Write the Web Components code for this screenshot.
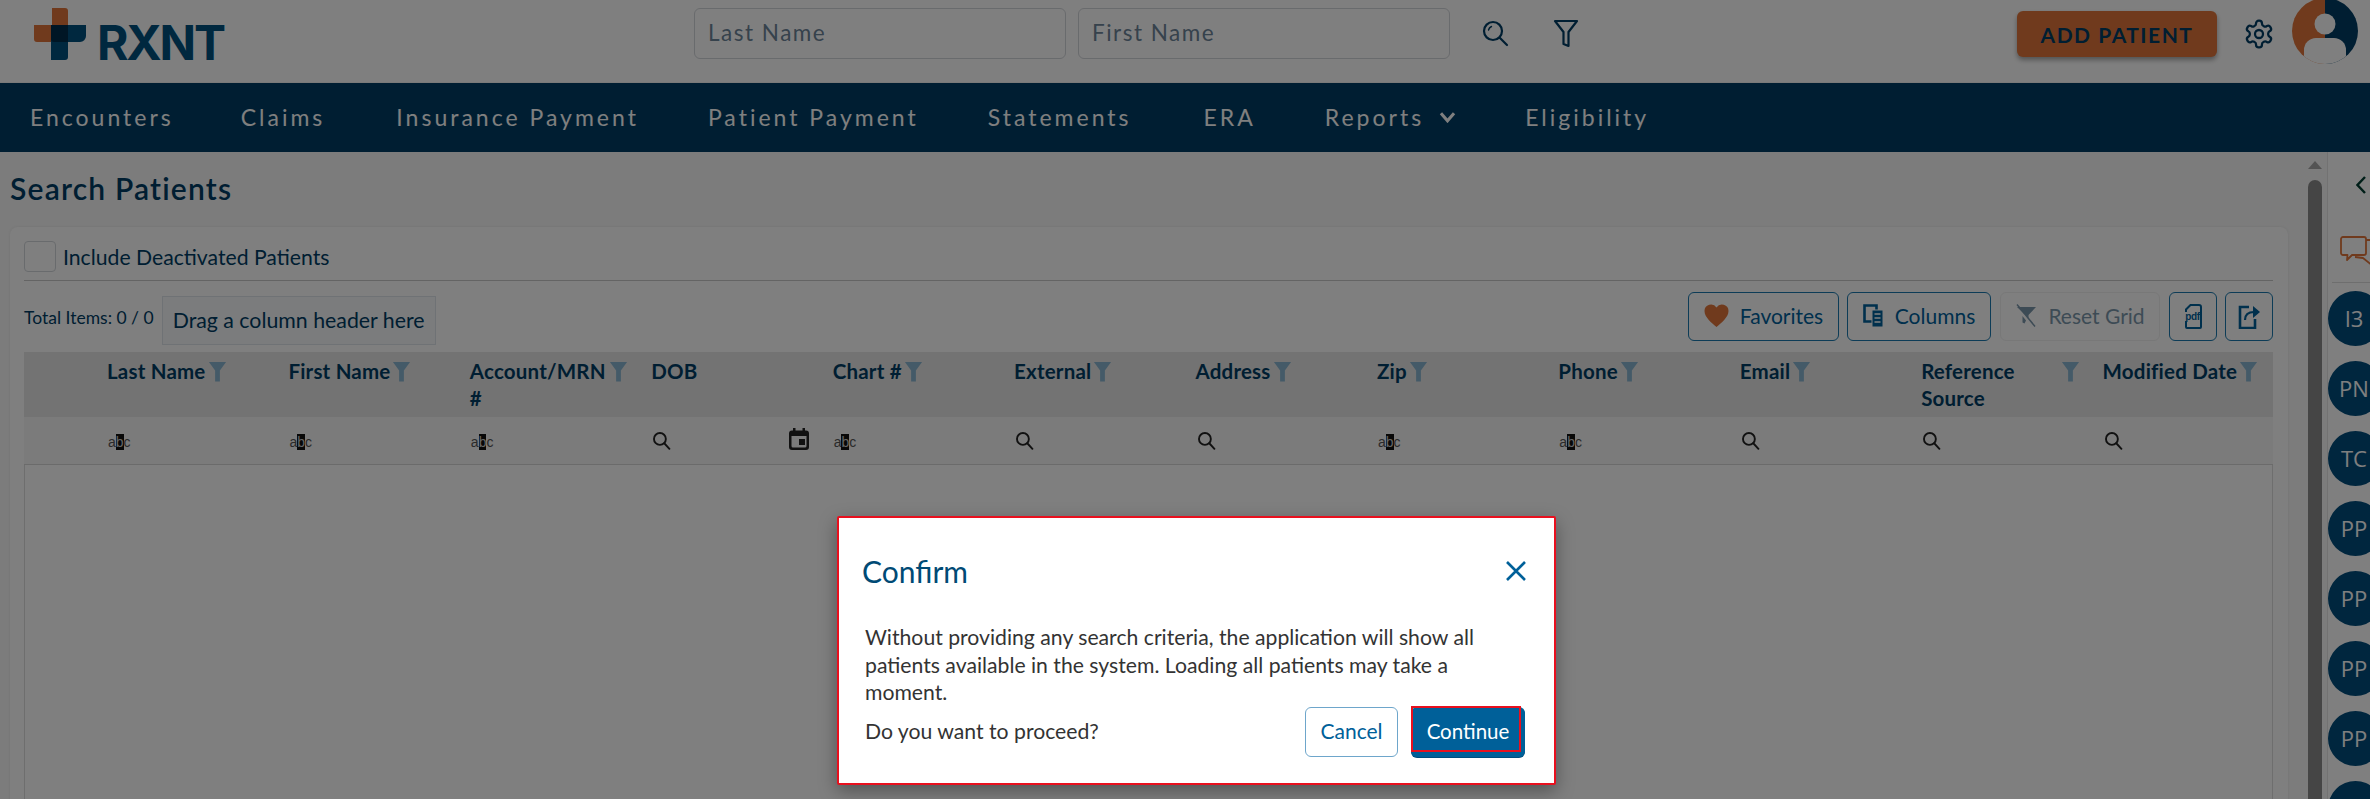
<!DOCTYPE html>
<html>
<head>
<meta charset="utf-8">
<title>Search Patients</title>
<style>
  html, body { margin: 0; height: 799px; overflow: hidden; background: #fff; }
  body { font-family: Lato, "Open Sans", sans-serif; color: #003d64; }
</style>
</head>
<body>
<rx-app></rx-app>

<script>
// shared icons
const ICON = {
  search: `<svg viewBox="0 0 24 24" fill="none" stroke="currentColor" stroke-width="2.4" stroke-linecap="round"><circle cx="10" cy="10" r="7.5"/><path d="M15.5 15.5 22 22.5"/></svg>`,
  funnel: `<svg viewBox="0 0 20 22" fill="currentColor"><path d="M1 1h18l-6.5 9v11.5h-5V10z"/></svg>`,
  gear: `<svg viewBox="0 0 24 24" fill="none" stroke="currentColor" stroke-width="1.7" stroke-linejoin="round"><path d="M12.22 2h-.44a2 2 0 0 0-2 2v.18a2 2 0 0 1-1 1.73l-.43.25a2 2 0 0 1-2 0l-.15-.08a2 2 0 0 0-2.73.73l-.22.38a2 2 0 0 0 .73 2.73l.15.1a2 2 0 0 1 1 1.72v.51a2 2 0 0 1-1 1.74l-.15.09a2 2 0 0 0-.73 2.73l.22.38a2 2 0 0 0 2.73.73l.15-.08a2 2 0 0 1 2 0l.43.25a2 2 0 0 1 1 1.73V20a2 2 0 0 0 2 2h.44a2 2 0 0 0 2-2v-.18a2 2 0 0 1 1-1.73l.43-.25a2 2 0 0 1 2 0l.15.08a2 2 0 0 0 2.73-.73l.22-.39a2 2 0 0 0-.73-2.73l-.15-.08a2 2 0 0 1-1-1.74v-.5a2 2 0 0 1 1-1.74l.15-.09a2 2 0 0 0 .73-2.73l-.22-.38a2 2 0 0 0-2.73-.73l-.15.08a2 2 0 0 1-2 0l-.43-.25a2 2 0 0 1-1-1.73V4a2 2 0 0 0-2-2z"/><circle cx="12" cy="12" r="3"/></svg>`
};

// top bar with logo, name search and the account bits
class RxHeader extends HTMLElement {
  constructor() {
    super();
    this.attachShadow({ mode: "open" }).innerHTML = `
<style>
  :host { display: flex; align-items: flex-start; height: 82px; border-bottom: 1px solid #f4f4f4; background: #fff; box-sizing: content-box; }
  .logo { display: flex; margin: 8px 0 0 34px; width: 660px; height: 60px; }
  .logo svg { width: 52px; height: 52px; flex: none; }
  .logo b { font: 700 48px/35px Inter, sans-serif; margin: 17px 0 0 11px; color: #00507f; letter-spacing: -2.2px; }
  input { width: 372px; height: 51px; margin: 8px 12px 0 0; padding: 0 13px 2px; box-sizing: border-box; border: 1px solid #d2d6da; border-radius: 6px; font: 22.5px Lato, sans-serif; letter-spacing: 1.5px; background: #fff; outline: none; }
  input::placeholder { color: #6c8499; opacity: 1; }
  .ico { flex: none; display: block; }
  .add { margin: 11px 0 0 0; width: 200px; height: 46px; border: 0; border-radius: 6px; background: #e0753a; color: #003d64; font: 700 21px Lato, sans-serif; letter-spacing: 1.5px; box-shadow: 0 3px 5px rgba(0,0,0,.35); }
  .gear { color: #003d64; }
  .avatar { width: 66px; height: 66px; margin: -2px 0 0 17px; flex: none; }
</style>
<div class="logo">
  <svg viewBox="0 0 52 52">
    <path d="M18 0h13a3 3 0 0 1 3 3v31H3a3 3 0 0 1-3-3V17h18z" fill="#e0753a"/>
    <path d="M17 17h35v11a6 6 0 0 1-6 6H34v15a3 3 0 0 1-3 3H17z" fill="#00507f"/>
    <path d="M17 17h17v17H20a3 3 0 0 1-3-3z" fill="#002c4a"/>
  </svg>
  <b>RXNT</b>
</div>
<input placeholder="Last Name"><input placeholder="First Name">
<svg class="ico" style="width:28px;height:28px;margin:20px 0 0 20px" viewBox="0 0 28 28" fill="none" stroke="#003d64" stroke-width="2.2" stroke-linecap="round"><circle cx="11" cy="11" r="9"/><path d="M18 18 25 25"/><path d="M6.5 10A5 5 0 0 1 9.5 6.5" stroke-width="1.4"/></svg>
<svg class="ico" style="width:28px;height:30px;margin:19px 0 0 42px" viewBox="0 0 28 30" fill="none" stroke="#003d64" stroke-width="2.2" stroke-linejoin="round"><path d="M3 2h22l-8.5 11v14l-5-2V13z"/></svg>
<span style="width:437px;flex:none"></span>
<button class="add">ADD PATIENT</button>
<span class="ico gear" style="width:32px;height:32px;margin:18px 0 0 26px">${ICON.gear}</span>
<svg class="avatar" viewBox="0 0 66 66">
  <defs><clipPath id="c"><circle cx="33" cy="33" r="33"/></clipPath></defs>
  <g clip-path="url(#c)">
    <rect width="33" height="66" fill="#e0753a"/>
    <rect x="33" width="33" height="66" fill="#003d64"/>
    <circle cx="33" cy="26" r="10.5" fill="#fff"/>
    <path d="M12 66V52a12 12 0 0 1 12-12h18a12 12 0 0 1 12 12v14z" fill="#fff"/>
  </g>
</svg>`;
  }
}
customElements.define("rx-header", RxHeader);

class RxNavItem extends HTMLElement {
  constructor() {
    super();
    this.attachShadow({ mode: "open" }).innerHTML = `
<style>
  :host { display: inline-flex; align-items: center; gap: 15px; font: 400 23px Lato, sans-serif; letter-spacing: 3px; color: #fff; white-space: nowrap; }
  ::slotted(svg) { width: 17px; height: 12px; }
</style><slot></slot><slot name="after"></slot>`;
  }
}
customElements.define("rx-nav-item", RxNavItem);

class RxNav extends HTMLElement {
  constructor() {
    super();
    this.attachShadow({ mode: "open" }).innerHTML = `
<style>
  :host { display: flex; align-items: center; gap: 69px; height: 69px; padding-left: 30px; background: #003c64; padding-bottom: 1px; box-sizing: border-box; }
</style><slot></slot>`;
  }
}
customElements.define("rx-nav", RxNav);

// small buttons above the grid
class RxToolButton extends HTMLElement {
  constructor() {
    super();
    this.attachShadow({ mode: "open" }).innerHTML = `
<style>
  :host { display: flex; align-items: center; justify-content: center; gap: 11px; height: 49px; padding-bottom: 2px; box-sizing: border-box; border: 1px solid #1a78ae; border-radius: 6px; font: 21px Lato, sans-serif; color: #00609a; background: #fff; }
  :host([disabled]) { border-color: #f0f0f0; color: #7b97ab; }
</style><slot></slot>`;
  }
}
customElements.define("rx-tool-button", RxToolButton);

class RxHeadCell extends HTMLElement {
  constructor() {
    super();
    const wrap = this.hasAttribute("wrap");
    this.attachShadow({ mode: "open" }).innerHTML = `
<style>
  :host { display: flex; align-items: flex-start; justify-content: ${wrap ? "space-between" : "flex-start"}; padding: 6px 12px 0 11px; font: 700 20.5px/27px Lato, sans-serif; letter-spacing: .2px; color: #003d64; }
  svg { width: 19px; height: 21px; flex: none; color: #88b4d0; margin: 3px 0 0 2px; }
</style>
<span><slot></slot></span>
${this.hasAttribute("plain") ? "" : ICON.funnel}`;
  }
}
customElements.define("rx-head-cell", RxHeadCell);

class RxFilterCell extends HTMLElement {
  constructor() {
    super();
    const kind = this.getAttribute("kind");
    let icon = `<span class="abc">a<i>b</i>c</span>`;
    if (kind != "abc") icon = `<span class="s">${ICON.search}</span>`;
    let cal = "";
    if (kind == "date") cal = `<svg class="cal" viewBox="0 0 20 22" fill="#222"><path d="M4 0h2.5v2.5h7V0H16v2.5h1a3 3 0 0 1 3 3V19a3 3 0 0 1-3 3H3a3 3 0 0 1-3-3V5.5a3 3 0 0 1 3-3h1zM2.5 8v10a1.5 1.5 0 0 0 1.5 1.5h12a1.5 1.5 0 0 0 1.5-1.5V8z"/><rect x="10" y="11" width="6" height="6"/></svg>`;
    this.attachShadow({ mode: "open" }).innerHTML = `
<style>
  :host { display: flex; align-items: center; justify-content: space-between; padding: 0 ${kind == "date" ? 13 : 12}px 0 12px; }
  .abc { font: 14px/17px "Liberation Sans", sans-serif; color: #555; margin-top: 3px; }
  .abc i { font-style: normal; background: #111; color: #ccc; }
  .s { width: 19px; height: 19px; color: #222; display: block; }
  .cal { width: 20px; height: 22px; margin-top: -3px; }
</style>${icon}${cal}`;
  }
}
customElements.define("rx-filter-cell", RxFilterCell);

// the patient grid: toolbar, header row, filter row and an empty body
class RxGrid extends HTMLElement {
  constructor() {
    super();
    const cols = [["Last Name","abc"],["First Name","abc"],["Account/MRN<br>#","abc","wrap"],["DOB","date","plain"],["Chart #","abc"],["External","s"],["Address","s"],["Zip","abc"],["Phone","abc"],["Email","s"],["Reference<br>Source","s","wrap"],["Modified Date","s"]];
    const head = cols.map(c => `<rx-head-cell ${c[2] || ""}>${c[0]}</rx-head-cell>`).join("");
    const filt = cols.map(c => `<rx-filter-cell kind="${c[1]}"></rx-filter-cell>`).join("");
    this.attachShadow({ mode: "open" }).innerHTML = `
<style>
  :host { display: block; }
  .tools { display: flex; align-items: flex-start; height: 60px; padding-top: 11px; box-sizing: content-box; }
  .total { font: 17.5px Lato, sans-serif; margin: 15px 8px 0 0; color: #003d64; white-space: nowrap; }
  .drag { margin-top: 4px; height: 49px; padding: 0 10px 2px; display: flex; align-items: center; box-sizing: border-box; background: #f6f8fa; border: 1px solid #dfe5ea; font: 21.3px Lato, sans-serif; color: #003d64; white-space: nowrap; }
  .right { margin-left: auto; display: flex; gap: 8px; }
  .row { display: grid; grid-template-columns: 72px repeat(12, 1fr); }
  .head { height: 65px; background: #e6e6e6; }
  .filter { height: 47px; background: #f6f6f6; border-bottom: 1px solid #d6d6d6; box-sizing: content-box; }
  .body { height: 400px; border: solid #dcdcdc; border-width: 0 1px; }
  svg { display: block; }
</style>
<div class="tools">
  <div class="total">Total Items: 0 / 0</div>
  <div class="drag">Drag a column header here</div>
  <div class="right">
    <rx-tool-button style="width:151px">
      <svg width="25" height="23" viewBox="0 0 25 23" fill="#e0753a"><path d="M12.5 23C8 19 .5 13.5.5 7A6.5 6.5 0 0 1 12.5 3.5 6.5 6.5 0 0 1 24.5 7C24.5 13.5 17 19 12.5 23z"/></svg>
      <span>Favorites</span>
    </rx-tool-button>
    <rx-tool-button style="width:144px">
      <svg width="21" height="24" viewBox="0 0 21 24" fill="none"><path d="M1.5 1.5h12v16h-12z" stroke="#00609a" stroke-width="2.6"/><path d="M9 6h11v17H9z" fill="#00609a" stroke="#fff" stroke-width="1"/><path d="M11.5 10h6M11.5 14h6M11.5 18h6" stroke="#fff" stroke-width="1.3"/></svg>
      <span>Columns</span>
    </rx-tool-button>
    <rx-tool-button disabled style="width:160px;margin-left:1px">
      <svg width="22" height="24" viewBox="0 0 22 24" fill="#7b97ab"><path d="M2 3h19l-7.5 8v3z"/><path d="M7.5 12l3.5 4.5-1.5 3-2-1z"/><path d="M2 .5l18 22" stroke="#7b97ab" stroke-width="1.5"/></svg>
      <span>Reset Grid</span>
    </rx-tool-button>
    <rx-tool-button style="width:48px;margin-left:1px">
      <svg width="20" height="26" viewBox="0 0 20 26"><path d="M3 9V6.5L7.5 2H16a2 2 0 0 1 2 2v20a1 1 0 0 1-1 1H4a1 1 0 0 1-1-1v-6" fill="none" stroke="#00609a" stroke-width="2"/><text x="9.500" y="17" font-family="Liberation Sans" font-size="10" font-weight="700" text-anchor="middle" fill="#00609a" style="letter-spacing:-.3px">pdf</text></svg>
    </rx-tool-button>
    <rx-tool-button style="width:48px">
      <svg width="23" height="26" viewBox="0 0 23 26" fill="none" stroke="#00609a" stroke-width="2.6"><path d="M11 4H2v21h15v-9"/><path d="M7 17c0-5 3-8 9-8" stroke-width="2.2"/><path d="M15 3l7 6-7 6z" fill="#00609a" stroke="none"/></svg>
    </rx-tool-button>
  </div>
</div>
<div class="row head"><span></span>${head}</div>
<div class="row filter"><span></span>${filt}</div>
<div class="body"></div>`;
  }
}
customElements.define("rx-grid", RxGrid);

class RxSearchPage extends HTMLElement {
  constructor() {
    super();
    this.attachShadow({ mode: "open" }).innerHTML = `
<style>
  :host { display: block; flex: none; width: 2304px; height: 647px; overflow: hidden; background: #f8f8f8; box-sizing: border-box; padding: 19px 0 0 10px; }
  h1 { margin: 0; font: 600 30px/34px Lato, sans-serif; color: #003d64; letter-spacing: 1.2px; }
  .card { width: 2278px; height: 640px; margin-top: 22px; background: #fff; border-radius: 8px; box-sizing: border-box; padding: 14px 15px 0 14px; box-shadow: 0 0 3px rgba(0,0,0,.08); }
  .check { display: flex; height: 39px; border-bottom: 1px solid #c8c8c8; box-sizing: content-box; align-items: flex-start; font: 21.2px/33px Lato, sans-serif; color: #003d64; gap: 7px; }
  .box { width: 32px; height: 31px; box-sizing: border-box; border: 1px solid #d2d6da; border-radius: 4px; background: #fff; }
</style>
<h1>Search Patients</h1>
<div class="card">
  <div class="check"><span class="box"></span><span>Include Deactivated Patients</span></div>
  <rx-grid></rx-grid>
</div>`;
  }
}
customElements.define("rx-search-page", RxSearchPage);

class RxRail extends HTMLElement {
  constructor() {
    super();
    // the last circle only peeks in at the bottom, its label is below the fold
    const names = ["I3","PN","TC","PP","PP","PP","PP",""];
    this.attachShadow({ mode: "open" }).innerHTML = `
<style>
  :host { display: block; flex: none; width: 43px; height: 647px; overflow: hidden; background: #fff; border-left: 1px solid #e4e4e4; box-sizing: border-box; }
  .chev { display: block; margin: 24px 0 0 28px; }
  .chat { display: block; margin: 42px 0 0 12px; }
  hr { border: 0; border-top: 1px solid #dcdcdc; margin: 14px 0 8px 4px; width: 60px; }
  .list { display: flex; flex-direction: column; gap: 15px; }
  .c { width: 55px; height: 55px; border-radius: 50%; background: #004c7c; color: #fff; font: 22px/55px "Open Sans", sans-serif; text-align: center; flex: none; padding-right: 3px; box-sizing: border-box; }
</style>
<svg class="chev" width="10" height="18" viewBox="0 0 10 18" fill="none" stroke="#003d30" stroke-width="2.4"><path d="M9 1 1.5 9 9 17"/></svg>
<svg class="chat" width="40" height="32" viewBox="0 0 40 32" fill="none" stroke="#e0753a" stroke-width="1.8" stroke-linejoin="round"><path d="M3 1h21a2 2 0 0 1 2 2v14a2 2 0 0 1-2 2H12l-5 5 .5-5H3a2 2 0 0 1-2-2V3a2 2 0 0 1 2-2z"/><path d="M26 4h12v16h-6l1 10-10-8-8-1"/></svg>
<hr>
<div class="list">${names.map(n => `<div class="c">${n}</div>`).join("")}</div>`;
  }
}
customElements.define("rx-rail", RxRail);

class RxScrollbar extends HTMLElement {
  constructor() {
    super();
    this.attachShadow({ mode: "open" }).innerHTML = `
<style>
  :host { display: block; flex: none; width: 23px; height: 647px; background: #f8f8f8; box-sizing: border-box; padding: 9px 0 0 4px; }
  .up { width: 0; height: 0; border: 7px solid transparent; border-top: 0; border-bottom: 8px solid #a6a6a6; }
  .thumb { width: 14px; height: 620px; margin-top: 11px; background: #8a8a8a; border-radius: 7px 7px 0 0; }
</style><div class="up"></div><div class="thumb"></div>`;
  }
}
customElements.define("rx-scrollbar", RxScrollbar);

// modal over the dimmed page
class RxConfirm extends HTMLElement {
  constructor() {
    super();
    this.attachShadow({ mode: "open" }).innerHTML = `
<style>
  :host { position: absolute; left: 837px; top: 516px; width: 719px; height: 269px; box-sizing: border-box; border: 2px solid #e8101e; background: #fff; border-radius: 2px; box-shadow: 0 6px 18px rgba(0,0,0,.35); padding: 0 29px 0 26px; color: #333; }
  .top { display: flex; justify-content: space-between; align-items: center; height: 48px; margin: 29px 0 0 -3px; }
  h2 { margin: 0; font: 400 30px Lato, sans-serif; color: #004a75; }
  .x { display: block; margin-right: -2px; }
  p { margin: 29px 0 0 0; font: 21.2px/27.7px Lato, sans-serif; }
  .foot { display: flex; align-items: flex-start; margin-top: 0; }
  .q { font: 21.2px/27.7px Lato, sans-serif; margin-top: 11px; }
  .cancel, .go { height: 50px; padding-bottom: 3px; box-sizing: border-box; border-radius: 6px; font: 21px Lato, sans-serif; display: flex; align-items: center; justify-content: center; }
  .cancel { margin-left: auto; width: 93px; border: 1px solid #6ea6cb; color: #006099; background: #fff; }
  .go { position: relative; width: 114px; margin-left: 13px; background: #006099; color: #fff; font-size: 20.5px; box-shadow: 0 1px 0 #004d7d; }
  .go::after { content: ""; position: absolute; left: 0; top: -1px; width: 110px; height: 46px; border: 2px solid #e8101e; box-sizing: border-box; }
</style>
<div class="top">
  <h2>Confirm</h2>
  <svg class="x" width="22" height="22" viewBox="0 0 22 22" fill="none" stroke="#006099" stroke-width="2.6"><path d="M2 2 20 20M20 2 2 20"/></svg>
</div>
<p>Without providing any search criteria, the application will show all patients available in the system. Loading all patients may take a moment.</p>
<div class="foot">
  <span class="q">Do you want to proceed?</span>
  <span class="cancel">Cancel</span>
  <span class="go"><span>Continue</span></span>
</div>`;
  }
}
customElements.define("rx-confirm", RxConfirm);

class RxApp extends HTMLElement {
  constructor() {
    super();
    this.attachShadow({ mode: "open" }).innerHTML = `
<style>
  :host { display: block; position: relative; height: 799px; overflow: hidden; }
  .main { display: flex; }
  .dim { position: absolute; inset: 0; background: rgba(0,0,0,.5); }
</style>
<rx-header></rx-header>
<rx-nav>
  <rx-nav-item style="margin-right:-2px">Encounters</rx-nav-item>
  <rx-nav-item>Claims</rx-nav-item>
  <rx-nav-item style="margin-left:2px">Insurance Payment</rx-nav-item>
  <rx-nav-item>Patient Payment</rx-nav-item>
  <rx-nav-item>Statements</rx-nav-item>
  <rx-nav-item style="margin-left:3px">ERA</rx-nav-item>
  <rx-nav-item>Reports <svg slot="after" viewBox="0 0 15 11" fill="none" stroke="#fff" stroke-width="2.8"><path d="M1.5 2 7.5 9 13.5 2"/></svg></rx-nav-item>
  <rx-nav-item>Eligibility</rx-nav-item>
</rx-nav>
<div class="main">
  <rx-search-page></rx-search-page>
  <rx-scrollbar></rx-scrollbar>
  <rx-rail></rx-rail>
</div>
<div class="dim"></div>
<rx-confirm></rx-confirm>`;
  }
}
customElements.define("rx-app", RxApp);
</script>
</body>
</html>
